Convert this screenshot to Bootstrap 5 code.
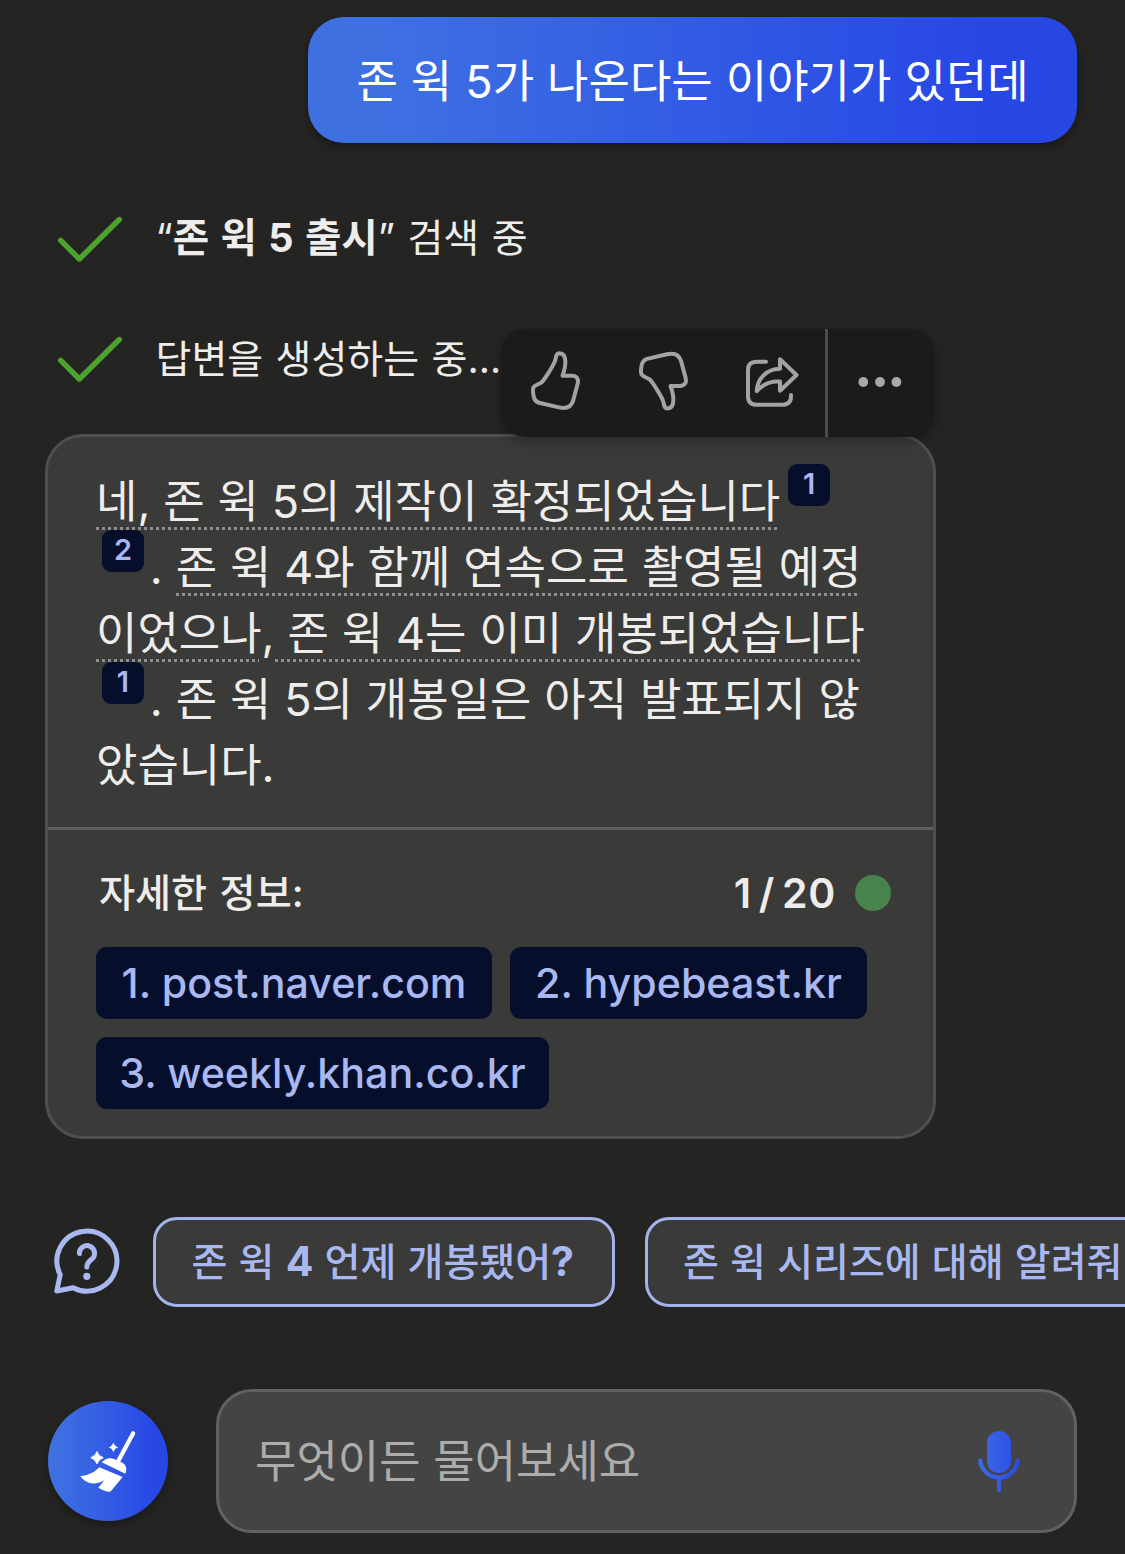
<!DOCTYPE html>
<html lang="ko" data-bs-theme="dark">
<head>
<meta charset="utf-8">
<meta name="viewport" content="width=device-width, initial-scale=1">
<title>Chat</title>
<link href="https://cdn.jsdelivr.net/npm/bootstrap@5.3.0/dist/css/bootstrap.min.css" rel="stylesheet">
<style>
  body { background: #242422; color: #eeedeb; font-family: Inter, "Noto Sans CJK KR", sans-serif; }
  .chat-page { width: 1125px; height: 1554px; padding: 17px 0 0 45px; }
  .user-bubble { width: 769px; height: 126px; margin-right: 48px; padding-top: 3px; border-radius: 36px; font-size: 45px; word-spacing: .4px; color: #fff;
    background: linear-gradient(90deg, #3e70e2 10%, #2747e5 88%); box-shadow: 0 4px 10px rgba(0,0,0,.35); }
  .status-line { height: 60px; font-size: 39px; word-spacing: 1.5px; white-space: pre; }
  .status-line b { font-size: 39.6px; word-spacing: 2px; }
  .status-line svg { margin-left: 9px; margin-right: 25.5px; }
  .status-a { margin-top: 66px; }
  .status-b { margin-top: 60px; }
  .answer { width: 891px; height: 705px; margin-top: 45px; border: 3px solid #504f4f; border-radius: 38px; background: #3a3a38; }
  .answer-text { height: 390px; padding: 30px 0 0 48px; font-size: 45px; word-spacing: .2px; }
  .text-line { height: 66px; line-height: 69px; white-space: pre; }
  .cited { height: 66px; background: repeating-linear-gradient(90deg, #8f8f8e 0 3px, transparent 3px 6px) 0 60px / calc(100% - 3px) 3px no-repeat; }
  .ref-num { width: 42px; height: 42px; margin-top: -3px; border-radius: 9px; background: #050e2b; color: #a9b8f0; font-size: 29px; line-height: 39px; font-weight: 600; text-align: center; }
  .ref-first { margin-left: 6px; }
  .stop-mark { margin-left: -7px; }
  .sources { height: 309px; border-top: 3px solid #5f5f5e; padding: 33px 42px 0 48px; }
  .sources-head { height: 60px; padding-top: 1px; font-size: 39px; font-weight: 500; word-spacing: 2px; }
  .sources-head .head-label { margin-left: 3px; font-size: 39.2px; }
  .sources-head .head-count { font-size: 41px; font-weight: 600; word-spacing: -4px; letter-spacing: .7px; }
  .dot-ok { width: 36px; height: 36px; margin-top: -1px; background: #48834d; margin-left: 19px; }
  .source-list { gap: 18px; margin-top: 24px; }
  .source-link { height: 72px; padding-top: 1px; border-radius: 11px; background: #050e2b; color: #a9b8f0; font-size: 41.2px; font-weight: 500; white-space: pre; }
  .w-naver { width: 396px; }
  .w-hype { width: 357px; }
  .w-khan { width: 453px; }
  .tool-strip { left: 453px; top: -108px; width: 433px; height: 108px; border-radius: 24px; background: #1b1b1a; box-shadow: 0 4px 12px rgba(0,0,0,.3); z-index: 2; }
  .tool-strip .sep { width: 3px; height: 108px; background: #4b4b4a; }
  .suggest-row { margin-top: 78px; height: 90px; }
  .suggest { height: 90px; border: 3px solid #a4b3ec; border-radius: 24px; background: #3a3a38; color: #a9b8f0; font-size: 39px; font-weight: 500; padding-left: 35.5px; word-spacing: .8px; white-space: pre; }
  .suggest b { font-size: 41px; line-height: 1; }
  .suggest-one { width: 462px; }
  .suggest-two { width: 560px; margin-left: 30px; padding-left: 35px; }
  .composer { margin-top: 82px; height: 144px; }
  .sweep { width: 120px; height: 120px; margin-left: 3px; background: linear-gradient(90deg, #3e70e2 8%, #2747e5 90%); box-shadow: 0 3px 9px rgba(0,0,0,.35); }
  .ask-box { width: 861px; height: 144px; margin-left: 48px; padding: 0 45px 0 36px; border: 3px solid #61615f; border-radius: 36px; background: #444444; color: #acacab; font-size: 45px; }
  .ask-box span { padding-top: 2px; }
</style>
</head>
<body>
<main class="chat-page overflow-hidden d-flex flex-column">
  <div class="user-bubble align-self-end d-flex align-items-center justify-content-center flex-shrink-0 text-nowrap">존 윅 5가 나온다는 이야기가 있던데</div>

  <div class="status-line status-a d-flex align-items-center flex-shrink-0">
    <svg width="76" height="60" fill="none" stroke="#4da32f" stroke-width="5.4" stroke-linecap="round" stroke-linejoin="round"><path d="M6.7 31.3 25.3 50 65.3 10.5"/></svg><span>“<b class="fw-bold">존 윅 5 출시</b>” 검색 중</span>
  </div>
  <div class="status-line status-b d-flex align-items-center flex-shrink-0">
    <svg width="76" height="60" fill="none" stroke="#4da32f" stroke-width="5.4" stroke-linecap="round" stroke-linejoin="round"><path d="M6.7 31.3 25.3 50 65.3 10.5"/></svg><span>답변을 생성하는 중...</span>
  </div>

  <section class="answer position-relative flex-shrink-0">
    <div class="tool-strip position-absolute d-flex">
      <svg width="108" height="108" fill="none" stroke="#a3a3a2" stroke-width="4" stroke-linejoin="round"><path d="M61.5 46.7C64.8 38 66.8 24.5 58.5 24.3 55.5 24.3 55 27 54.3 31 52.5 37 43 51 40.5 53.5 37 55.5 34 56 32.7 58 31.3 60 31.5 62 32.8 68 33.5 71 35.5 73 38 73.8L58 78.4C65 80 70 78 72 72L76.6 55C78 50 75.5 46.7 71 46.7Z"/></svg>
      <svg width="108" height="108" fill="none" stroke="#a3a3a2" stroke-width="4" stroke-linejoin="round"><path transform="matrix(1 0 0 -1 0 103.7)" d="M61.5 46.7C64.8 38 66.8 24.5 58.5 24.3 55.5 24.3 55 27 54.3 31 52.5 37 43 51 40.5 53.5 37 55.5 34 56 32.7 58 31.3 60 31.5 62 32.8 68 33.5 71 35.5 73 38 73.8L58 78.4C65 80 70 78 72 72L76.6 55C78 50 75.5 46.7 71 46.7Z"/></svg>
      <svg width="108" height="108" fill="none" stroke="#a3a3a2" stroke-width="4" stroke-linecap="round" stroke-linejoin="round"><path d="M49 32.7H39.5Q31 32.7 31 41V67Q31 75.8 39.5 75.8H65.5Q74 75.8 74 67V66"/><path d="M63 30.3 79.5 46 63 61.7V52.6C54 51.5 46 55.5 39.7 62 40.5 50 49 40 63 39.8Z"/></svg>
      <div class="sep"></div>
      <svg width="105" height="108" fill="#a9a9a8"><circle cx="35.3" cy="53" r="4.9"/><circle cx="52" cy="53" r="4.9"/><circle cx="68.4" cy="53" r="4.9"/></svg>
    </div>

    <div class="answer-text">
      <div class="text-line d-flex"><span class="cited">네, 존 윅 5의 제작이 확정되었습니다</span><span class="ref-num ms-2">1</span></div>
      <div class="text-line d-flex"><span class="ref-num ref-first">2</span><span class="stop-mark">&nbsp;. </span><span class="cited">존 윅 4와 함께 연속으로 촬영될 예정</span></div>
      <div class="text-line d-flex"><span class="cited">이었으나</span><span>,</span><span class="cited"> 존 윅 4는 이미 개봉되었습니다</span></div>
      <div class="text-line d-flex"><span class="ref-num ref-first">1</span><span class="stop-mark">&nbsp;. </span><span>존 윅 5의 개봉일은 아직 발표되지 않</span></div>
      <div class="text-line d-flex"><span>았습니다.</span></div>
    </div>

    <div class="sources">
      <div class="sources-head d-flex align-items-center"><span class="head-label">자세한 정보:</span><span class="head-count ms-auto">1 / 20</span><span class="dot-ok rounded-circle"></span></div>
      <div class="source-list d-flex flex-wrap">
        <a class="source-link w-naver d-flex align-items-center justify-content-center text-decoration-none">1. post.naver.com</a>
        <a class="source-link w-hype d-flex align-items-center justify-content-center text-decoration-none">2. hypebeast.kr</a>
        <a class="source-link w-khan d-flex align-items-center justify-content-center text-decoration-none">3. weekly.khan.co.kr</a>
      </div>
    </div>
  </section>

  <div class="suggest-row d-flex align-items-center flex-shrink-0">
    <svg class="flex-shrink-0" width="108" height="90" fill="none" stroke="#a9b8f0" stroke-width="5" stroke-linecap="round" stroke-linejoin="round"><path d="M11.8 74 15.2 57.7A30 30 0 1 1 28.1 70.7Z"/><path d="M34.4 36.5A7.6 7.6 0 1 1 46.3 42.5C43.3 45 41.8 46.5 41.8 50"/><circle cx="41.8" cy="59.3" r="3.6" fill="#a9b8f0" stroke="none"/></svg>
    <div class="suggest suggest-one d-flex align-items-center flex-shrink-0"><span>존 윅 <b>4</b> 언제 개봉됐어<b>?</b></span></div>
    <div class="suggest suggest-two d-flex align-items-center flex-shrink-0">존 윅 시리즈에 대해 알려줘</div>
  </div>

  <div class="composer d-flex align-items-center flex-shrink-0">
    <div class="sweep rounded-circle flex-shrink-0">
      <svg class="d-block" width="120" height="120" fill="#fff"><path d="M70 60.5 85.2 32.3" stroke="#fff" stroke-width="4.2" stroke-linecap="round"/><path d="M53.7 61.3C57 57.5 62 56 66.5 58.2L73.5 61.3C78 63.5 79.5 68 77.3 72.8Z"/><path d="M51.3 66.2 74.6 76 63.5 89.5C62.5 90.7 61.5 91 60 90.7 56.5 90 53 88.5 50.3 86.5 52.5 84.3 54.5 82 55.7 79.2 52.5 81.5 49.5 82.4 45.5 82.4 40.5 82.3 35.5 79.5 32.3 75.2 40 74.2 46.5 71.5 51.3 66.2Z"/><path d="M49 50.4Q50.6 55.1 55.3 56.7 50.6 58.3 49 63 47.4 58.3 42.7 56.7 47.4 55.1 49 50.4Z" stroke="#fff" stroke-width=".8" stroke-linejoin="round"/><path d="M65.4 41.4Q66.6 45.1 70.3 46.3 66.6 47.5 65.4 51.2 64.2 47.5 60.5 46.3 64.2 45.1 65.4 41.4Z"/></svg>
    </div>
    <div class="ask-box d-flex align-items-center justify-content-between flex-shrink-0">
      <span>무엇이든 물어보세요</span>
      <svg width="60" height="72"><defs><linearGradient id="mic" gradientUnits="userSpaceOnUse" x1="8" y1="0" x2="52" y2="0"><stop stop-color="#3d6de2"/><stop offset="1" stop-color="#2a49e4"/></linearGradient></defs><rect x="18" y="6" width="24" height="42" rx="12" fill="url(#mic)"/><path d="M11.2 35.5A18.9 18.9 0 0 0 48.8 35.5M30 53.5V65" fill="none" stroke="url(#mic)" stroke-width="4.2" stroke-linecap="round"/></svg>
    </div>
  </div>
</main>
<script src="https://cdn.jsdelivr.net/npm/bootstrap@5.3.0/dist/js/bootstrap.bundle.min.js"></script>
</body>
</html>
